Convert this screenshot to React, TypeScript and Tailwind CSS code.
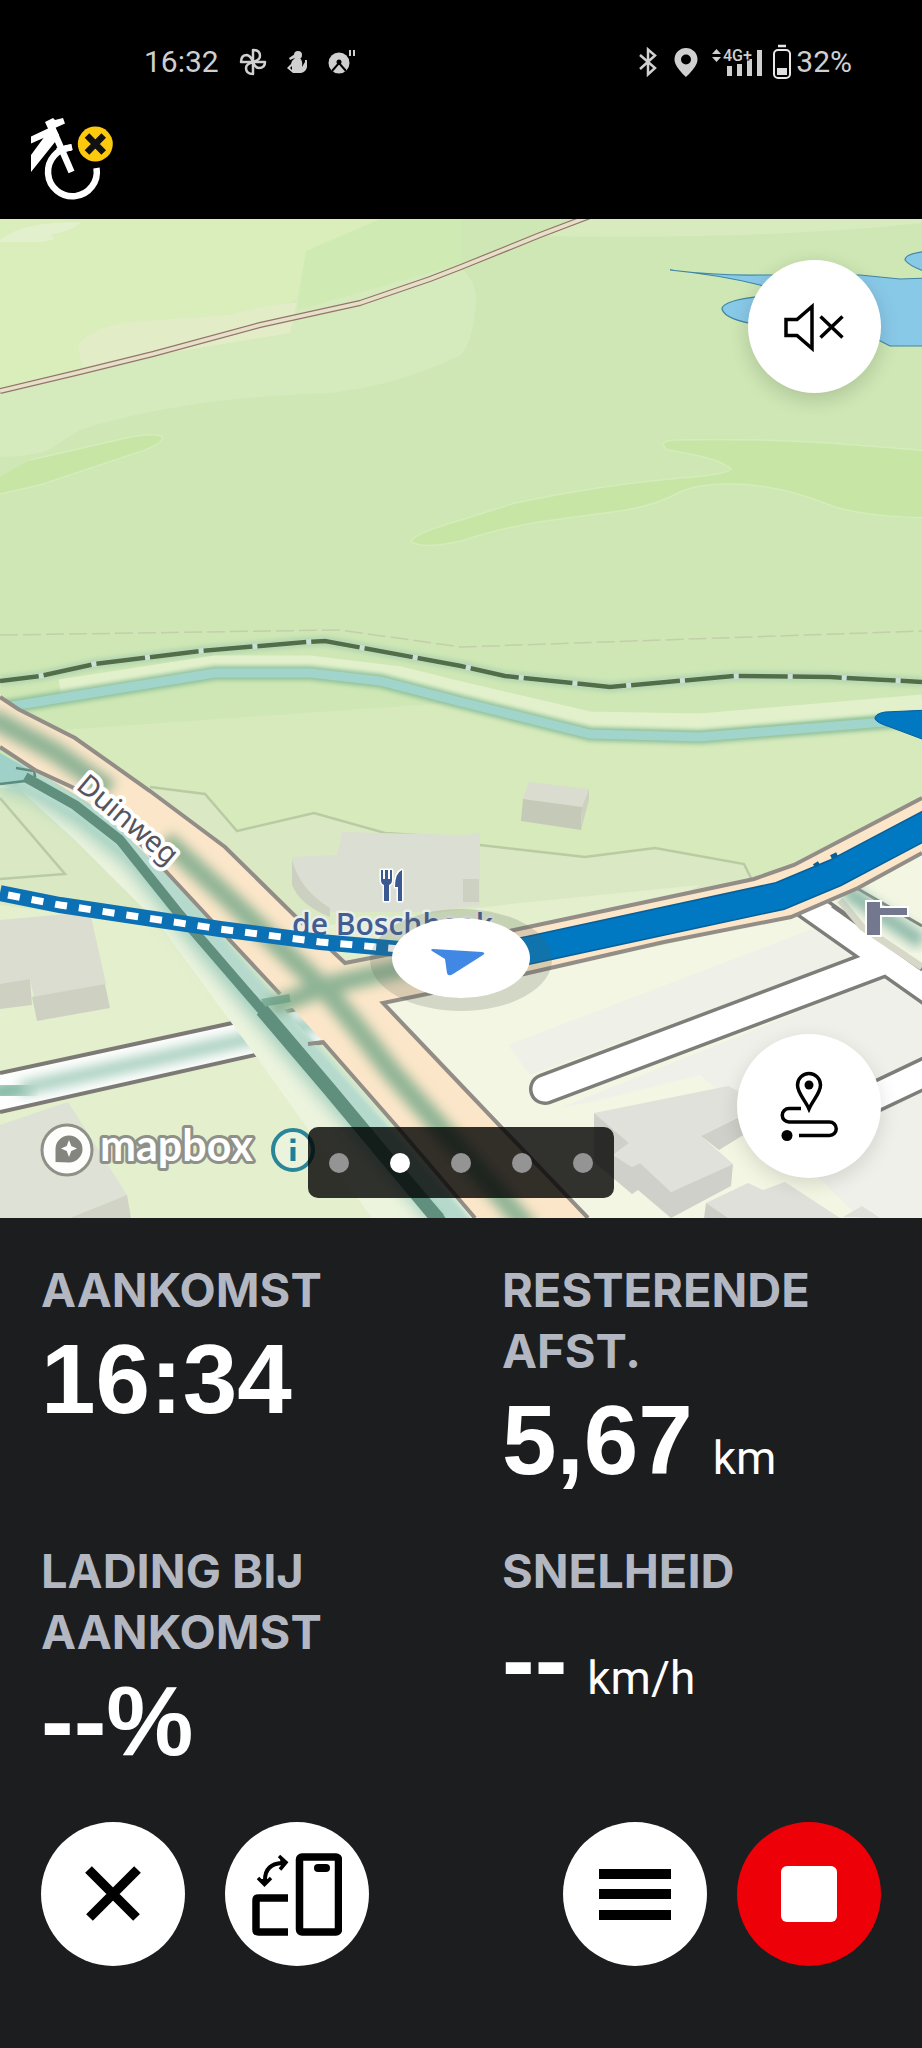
import React from 'react';

const metrics = [
  { label: 'AANKOMST', value: '16:34', unit: '' },
  { label: 'RESTERENDE AFST.', value: '5,67', unit: 'km' },
  { label: 'LADING BIJ AANKOMST', value: '--%', unit: '' },
  { label: 'SNELHEID', value: '--', unit: 'km/h' },
];

function StatusBar() {
  return (
    <div className="flex h-8 items-center justify-between pr-[70px] pl-[144px] font-['Roboto',sans-serif] text-[30px] leading-8 text-[#cfcfcf]">
      <div className="flex items-center gap-5">
        <time>16:32</time>
        <svg className="h-7 w-7" viewBox="0 0 28 28" fill="none" stroke="#d0d0d0" strokeWidth="2.5" strokeLinejoin="round" aria-hidden="true">
          <path d="M14 14V2Q21 2 21 8Q21 12 14 14Z" />
          <path d="M14 14H26Q26 20 20 20Q16 20 14 14Z" />
          <path d="M14 14V26Q7 26 7 20Q7 16 14 14Z" />
          <path d="M14 14H2Q2 7 8 7Q12 8 14 14Z" />
        </svg>
        <svg className="h-6 w-5" viewBox="0 0 20 24" fill="#d0d0d0" aria-hidden="true">
          <circle cx="11" cy="5" r="4" />
          <path fillRule="evenodd" d="M2 8L8 4L10 7L3 10ZM8 8H13Q16 11 15 17L18 12V10H20V17Q19 22 14 23H6L0 18L4 14Q5 10 8 8ZM5 16L3 18L5 20Z" />
        </svg>
        <svg className="h-7 w-7" viewBox="0 0 28 28" aria-hidden="true">
          <circle cx="12" cy="15" r="10.5" fill="#d0d0d0" />
          <path d="M5 23L12 15L19 23" fill="none" stroke="#000" strokeWidth="2" />
          <circle cx="12" cy="14" r="2.500" fill="#000" />
          <path d="M23 2V8M27 2V8" stroke="#d0d0d0" strokeWidth="2" />
        </svg>
      </div>
      <div className="flex items-center">
        <svg className="mr-4 h-8 w-[20px]" viewBox="0 0 20 32" fill="none" stroke="#d0d0d0" strokeWidth="2.500" aria-hidden="true">
          <path d="M2 9L17 22L10 28.500V3.500L17 9.500L2 23" />
        </svg>
        <svg className="mr-3 h-8 w-6" viewBox="0 0 24 32" fill="#d0d0d0" aria-hidden="true">
          <path fillRule="evenodd" d="M12 2A11.500 11.500 0 0 0 .5 13.500C.5 21 12 31 12 31S23.500 21 23.500 13.500A11.500 11.500 0 0 0 12 2ZM12 8.500A5 5 0 1 1 12 18.500A5 5 0 0 1 12 8.500Z" />
        </svg>
        <svg className="mr-2 h-9 w-[54px]" viewBox="0 0 54 36" fill="#d0d0d0" aria-hidden="true">
          <path d="M2 10L6.500 5L11 10ZM2 13H11L6.500 18Z" />
          <path d="M17 22H22V32H17ZM27 20H32V32H27ZM37 15H42V32H37ZM47 6H52V32H47Z" />
          <text x="13" y="17" fontFamily="Roboto" fontWeight="500" fontSize="16" stroke="#000" strokeWidth="2" paintOrder="stroke">4G+</text>
        </svg>
        <svg className="mr-1 h-9 w-5" viewBox="0 0 20 36" aria-hidden="true">
          <path d="M6 2H14" stroke="#e8e8e8" strokeWidth="2.500" />
          <rect x="2" y="6" width="16" height="28" rx="4" fill="none" stroke="#e8e8e8" strokeWidth="2" />
          <rect x="5" y="24" width="10" height="7" fill="#e0e0e0" />
        </svg>
        <span>32%</span>
      </div>
    </div>
  );
}

function BikeDisconnected() {
  return (
    <svg className="mt-[39px] ml-[30px] h-[84px] w-[84px]" viewBox="30 117 84 84" role="img" aria-label="Fiets niet verbonden">
      <path d="M96.500 168A24.400 24.400 0 1 1 71.500 147.500" fill="none" stroke="#fff" strokeWidth="6.500" />
      <path d="M57 151L72 147" stroke="#fff" strokeWidth="6" />
      <path d="M51 125L71.500 172" stroke="#fff" strokeWidth="6.500" />
      <path d="M45 122L53 118L55 120L63 118L65 123.500L55 128L59 135L55 142L31 172V155L43.500 138L31 143.500V136.500L48 128.500Z" fill="#fff" />
      <circle cx="95.300" cy="144" r="17.500" fill="#fdc90f" />
      <path d="M87 135.500L103.700 152.500M103.700 135.500L87 152.500" stroke="#111" strokeWidth="6.500" />
    </svg>
  );
}

function MapCanvas() {
  return (
    <svg className="block h-auto w-full" viewBox="0 219 922 999" role="img" aria-label="Navigatiekaart">
      <defs>
        <filter id="soft" x="-20%" y="-20%" width="140%" height="140%">
          <feGaussianBlur stdDeviation="6" />
        </filter>
        <filter id="softer" x="-20%" y="-20%" width="140%" height="140%">
          <feGaussianBlur stdDeviation="9" />
        </filter>
        <filter id="edge" x="-5%" y="-20%" width="110%" height="140%">
          <feGaussianBlur stdDeviation="2" />
        </filter>
      </defs>

      {/* land cover */}
      <rect y="219" width="922" height="999" fill="#cee7b4" />
      <path d="M0 219H461V355Q400 385 330 393Q180 398 80 430L45 452Q20 457 0 457Z" fill="#d5eabd" />
      <path d="M0 219H440L360 231L306 251L297 300L230 318L78 345L82 370L0 391Z" fill="#d9eebb" />
      <path d="M461 219H380L306 251L297 310L461 264Z" fill="#d0eab4" />
      <path d="M461 268V355Q474 340 476 300Q476 280 461 268Z" fill="#d5eabd" />
      <path d="M540 236Q760 240 922 223V219H590Z" fill="#d8ebbf" />
      <path d="M78 345Q90 328 130 322L230 315Q270 303 297 303L290 333L82 367Z" fill="#e2edc8" />
      <path d="M0 240Q20 222 80 222Q75 230 50 235Q62 240 40 242H0Z" fill="#e2f0cd" />
      <path d="M0 477L30 460L130 437Q160 432 163 438Q160 446 130 455L40 485L0 494Z" fill="#c7e6a5" />
      <path d="M30 460L130 437Q160 432 163 438Q160 446 130 455L40 485L0 494" fill="none" stroke="#d5ecbb" strokeWidth="1.500" />
      <path
        d="M411 541Q415 533 461 520L515 503Q600 485 680 478Q725 475 731 469Q720 458 667 450Q658 442 672 440Q750 438 830 443L930 451V518Q870 517 835 507Q780 485 735 484Q700 483 680 492Q655 506 620 511L560 519Q510 525 461 541Q420 550 411 541Z"
        fill="#c7e6a6" stroke="#d5ecbb" strokeWidth="1.500"
      />
      <path d="M0 391L80 372L153 354L260 325L360 303L430 279L461 267L540 235L590 216" fill="none" stroke="#94756a" strokeWidth="6" strokeLinejoin="round" />
      <path d="M0 391L80 372L153 354L260 325L360 303L430 279L461 267L540 235L590 216" fill="none" stroke="#e6e0c9" strokeWidth="3.600" strokeLinejoin="round" />
      <g fill="#89c9e8" stroke="#3f86a3" strokeWidth="1.200">
        <path d="M670 270Q720 276 760 275H860L900 279L930 278V346H890L800 300L760 285Q720 275 670 270Z" />
        <path d="M765 296Q722 300 722 309Q725 320 760 325L800 320Z" />
        <path d="M930 251Q905 253 905 260Q910 267 930 273Z" />
      </g>

      {/* fields south of the river */}
      <path d="M60 730L461 702L600 740L700 742L922 728V1218H0V760Z" fill="#d6eabb" />
      <path d="M0 760L150 787L205 794L237 831L314 813L385 833L585 857L655 848L744 864L754 880L520 940L300 960L0 1000Z" fill="#dae9c3" />
      <path d="M0 905L240 935L520 903L700 885L560 960L420 1218H0Z" fill="#e3efcd" />
      <path d="M383 1003L524 975L791 917L922 850V1218H588Z" fill="#f3f6e3" />
      <path d="M508 1045L815 928L860 955L530 1075Z" fill="#eff0e8" />
      <path d="M560 1108L888 976L922 1000V1218H860L790 1150L700 1075L600 1100Z" fill="#eff0e9" />
      <path d="M150 787L205 794L237 831L314 813L385 833L461 838M480 845L585 857L655 848L744 864L751 878M0 798L65 874L0 879" fill="none" stroke="#b9cba3" strokeWidth="2.500" />

      {/* boundary, path and river */}
      <path d="M0 635L340 630L461 647L922 631" fill="none" stroke="#c3cfab" strokeWidth="1.500" strokeDasharray="18 5" />
      <path d="M0 681L40 676L95 664L200 651L307 642L325 641L461 666L505 676L610 687L735 676L830 677L922 682" fill="none" stroke="#b3d6b0" strokeWidth="10" filter="url(#edge)" />
      <path d="M0 681L40 676L95 664L200 651L307 642L325 641L461 666L505 676L610 687L735 676L830 677L922 682" fill="none" stroke="#cbdfd6" strokeWidth="5" />
      <path d="M0 681L40 676L95 664L200 651L307 642L325 641L461 666L505 676L610 687L735 676L830 677L922 682" fill="none" stroke="#526e47" strokeWidth="4.500" strokeDasharray="49 5" strokeDashoffset="10" />
      <path d="M60 688L215 664H310L400 675L461 690L590 720L700 722L922 703" fill="none" stroke="#e2f1cb" strokeWidth="17" />
      <path d="M0 708L80 695L215 673H310L380 681L461 702L590 734L700 737L922 719" fill="none" stroke="#8fc09c" strokeWidth="14" filter="url(#edge)" />
      <path d="M0 708L80 695L215 673H310L380 681L461 702L590 734L700 737L922 719" fill="none" stroke="#a1d5cb" strokeWidth="9" />

      {/* buildings */}
      <path d="M529 782L589 789L582 807L523 799Z" fill="#dadccf" />
      <path d="M523 799L582 807L581 830L521 821Z" fill="#c5c9b7" />
      <path d="M582 807L589 789V800L581 830Z" fill="#ced1c0" />
      <path d="M292 857L337 855L342 832L461 835L480 833V905L430 912H330Q295 890 292 857Z" fill="#dbded2" />
      <path d="M292 860V885Q300 905 330 917V908Q300 890 292 860Z" fill="#cbd0c0" />
      <path d="M463 879H479V902H463Z" fill="#cdd1c1" />
      <path d="M0 920L90 912L106 984L34 997L30 979L0 985Z" fill="#dbddd0" />
      <path d="M0 984L30 979L32 1005L0 1009ZM32 997L105 984L110 1008L37 1021Z" fill="#ced1c2" />
      <path d="M0 1125L68 1102L127 1195L70 1218H0Z" fill="#dee1d5" />
      <path d="M127 1195L131 1218H70Z" fill="#d0d3c5" />
      <path d="M594 1113L728 1086L755 1100L740 1116L701 1136L733 1164L671 1192L640 1163L632 1167L613 1155L629 1143Z" fill="#e0e1da" />
      <path d="M594 1113L629 1143L613 1155L632 1167L640 1163L671 1192L733 1164L731 1186L671 1218L638 1190L632 1194L594 1162ZM701 1136L745 1114V1134L719 1150Z" fill="#cfd0c9" />
      <path d="M706 1203L748 1183L763 1190L785 1182L840 1218H706ZM843 1217L862 1206L880 1218Z" fill="#dfe0d9" />
      <path d="M706 1203L728 1218H704Z" fill="#cdcfc7" />

      {/* side streets */}
      <path d="M0 1073L250 1018L300 1008L325 1040L275 1050L0 1112Z" fill="#fdfefd" />
      <path d="M-10 1094L30 1087" stroke="#84b9a5" strokeWidth="20" filter="url(#soft)" />
      <path d="M20 1089L270 1034L330 1020" stroke="#a9cfc0" strokeWidth="14" fill="none" filter="url(#soft)" />
      <path d="M0 1073L297 1009M0 1112L277 1050L325 1042" fill="none" stroke="#7d7a75" strokeWidth="4" />
      <path d="M807 904L940 998M545 1089L880 963M860 1104L940 1066" fill="none" stroke="#7d7d7a" strokeWidth="32" strokeLinecap="round" />
      <path d="M807 904L940 998M545 1089L880 963M860 1104L940 1066" fill="none" stroke="#fff" strokeWidth="25" strokeLinecap="round" />
      <path d="M832 906L922 970M858 889L922 926" stroke="#7d7d7a" strokeWidth="3" />
      <path d="M840 900L862 927L922 967" fill="none" stroke="#d8d8c8" strokeWidth="7" />
      <path d="M845 890L922 942" stroke="#8bb8a9" strokeWidth="15" filter="url(#soft)" />

      {/* canal along the Duinweg */}
      <path d="M0 760L30 767L80 800L125 830L275 1000L475 1218H372L255 1055L160 925L75 840L20 790L0 788Z" fill="#edf4de" />
      <path d="M0 775L35 785L85 815L135 855L200 935L285 1035L450 1225" fill="none" stroke="#9acbbb" strokeWidth="26" filter="url(#softer)" />
      <path d="M20 778L85 812L147 862L222 950L300 1040L470 1230" fill="none" stroke="#b5dacd" strokeWidth="16" filter="url(#edge)" />
      <path d="M0 753L30 770L34 775L25 781L0 784Z" fill="#a0d1c8" />
      <path d="M16 768L34 771L35 776L25 781L0 784" fill="none" stroke="#5b8c7e" strokeWidth="2.500" />

      {/* Duinweg and the crossing road */}
      <path d="M0 694L18 709L75 738L150 791L225 847L295 916L345 963L514 930L754 879L794 865L922 798V853L858 888L791 917L664 942L524 974L383 1003L461 1085L588 1218H475L400 1130L323 1042L280 994L225 935L160 868L100 810L35 770L0 747Z" fill="#fbe6c9" />
      <g fill="none" stroke="#928d87" strokeWidth="4">
        <path d="M0 697L18 709L75 738L150 791L225 847L295 916L345 963L514 930L754 879L794 865L922 798" />
        <path d="M922 853L858 888L791 917L664 942L524 974L383 1003L461 1085L588 1218" />
        <path d="M475 1218L400 1130L323 1042L308 1044M280 994L225 935L160 865L100 800L35 770L0 747" />
      </g>
      <g fill="none" stroke="#8fb495" filter="url(#soft)">
        <path d="M-10 717L55 752L110 790M165 840L225 895L330 995L355 1025L390 1070L530 1230" strokeWidth="20" />
        <path d="M270 1008L330 985L450 957" strokeWidth="19" />
      </g>
      <path d="M25 777L75 805L120 840L180 915L262 1010L330 1090L440 1218" fill="none" stroke="#618f7d" strokeWidth="10" strokeLinejoin="round" />
      <path d="M262 1010L330 1090L440 1222" fill="none" stroke="#618f7d" strokeWidth="14" />
      <path d="M262 1003L290 998" stroke="#5d967d" strokeWidth="8" opacity=".6" />

      {/* labels */}
      <text
        transform="translate(75 788) rotate(40)" fontFamily="'Noto Sans', sans-serif" fontSize="29"
        fill="#55545e" stroke="#fff" strokeWidth="8" strokeLinejoin="round" paintOrder="stroke"
      >Duinweg</text>
      <text
        x="292" y="935" fontFamily="'Open Sans', sans-serif" fontWeight="600" fontSize="30"
        fill="#435d92" stroke="#e9eee8" strokeWidth="5" strokeLinejoin="round" paintOrder="stroke"
      >de Boschbeek</text>
      <g fill="#3c5a92" stroke="#fff" strokeWidth="3" paintOrder="stroke" strokeLinejoin="round">
        <path d="M381 870V880Q381 884 384 885V901H389V885Q392 884 392 880V870H390V879H388V870H385V879H383V870Z" />
        <path d="M402 870Q395 873 395 887H398V901H402Z" />
      </g>

      {/* travelled and upcoming route */}
      <path d="M0 893L60 905L220 929L320 942L400 949" fill="none" stroke="#0b70b4" strokeWidth="16" />
      <path d="M8 895L60 905L220 929L320 942L400 949" fill="none" stroke="#fff" strokeWidth="7" strokeDasharray="12 12" />
      <path d="M470 962L530 950L780 896L835 873L930 823" fill="none" stroke="#075f99" strokeWidth="29" />
      <path d="M470 962L530 950L780 896L835 873L930 823" fill="none" stroke="#0079c2" strokeWidth="26" />
      <path d="M814 866L819 863M831 857L837 854" fill="none" stroke="#075f99" strokeWidth="4" />
      <path d="M930 710L885 712Q874 714 875 719Q877 723 890 727L930 742Z" fill="#0079c2" stroke="#075f99" strokeWidth="1" />
      <path d="M867 902H880V908H907V915H880V935H867Z" fill="#73788f" stroke="#fff" strokeWidth="4" paintOrder="stroke" />

      {/* current position */}
      <ellipse cx="461" cy="960" rx="91" ry="51" fill="#55604f" opacity=".2" />
      <ellipse cx="461" cy="958" rx="69" ry="40" fill="#fff" />
      <path d="M433 949L482 952Q486 953 483 955L453 974Q448 977 447 973L445 959L432 951Q430 949 433 949Z" fill="#4187e4" />
    </svg>
  );
}

function Attribution() {
  return (
    <div className="absolute bottom-10 left-10 flex items-center gap-3">
      <a href="#mapbox" aria-label="mapbox">
        <svg className="block h-[56px] w-[218px]" viewBox="0 0 218 56" aria-hidden="true">
          <circle cx="27" cy="28" r="25" fill="#fdfefb" stroke="#8f9188" strokeWidth="3" />
          <path d="M15.500 40V27A13.500 13.500 0 1 1 29 40.500Z" fill="#84857f" />
          <path d="M29 18L31.300 24L37 26.500L31.300 29L29 35L26.700 29L21 26.500L26.700 24Z" fill="#fff" />
          <text
            x="60" y="39" fontFamily="Lato, sans-serif" fontWeight="700" fontSize="43"
            fill="#fff" stroke="#8f9188" strokeWidth="6" strokeLinejoin="round" paintOrder="stroke"
          >mapbox</text>
        </svg>
      </a>
      <button type="button" aria-label="Kaartinformatie">
        <svg className="block h-[46px] w-[46px]" viewBox="0 0 46 46" aria-hidden="true">
          <circle cx="23" cy="23" r="20" fill="#eef5e4" fillOpacity=".7" stroke="#2a8598" strokeWidth="4" />
          <path d="M20.500 11.500H25.500V16H20.500ZM20.500 20H25.500V34H20.500Z" fill="#1f7f96" />
        </svg>
      </button>
    </div>
  );
}

function RoundButton({ label, className, children }: { label: string; className: string; children: React.ReactNode }) {
  return (
    <button type="button" aria-label={label} className={`flex items-center justify-center rounded-full ${className}`}>
      {children}
    </button>
  );
}

export default function App() {
  return (
    <div className="flex min-h-screen flex-col bg-[#1c1d1f]">
      <header className="bg-black pt-[46px] pb-[18px]">
        <StatusBar />
        <BikeDisconnected />
      </header>

      <main className="flex flex-col">
        <section className="relative overflow-hidden">
          <MapCanvas />
          <Attribution />
          <RoundButton label="Geluid uit" className="absolute top-[41px] right-[41px] size-[133px] bg-white shadow-[0_6px_20px_rgba(0,0,0,0.16)]">
            <svg className="h-[54px] w-[62px]" viewBox="0 0 62 54" fill="none" stroke="#000" strokeWidth="3.500" aria-hidden="true">
              <path d="M2 19.500V35.500H13L28 48.500V6.500L13 19.500Z" />
              <path d="M36.500 16.500L58.500 37.500M58.500 16.500L36.500 37.500" />
            </svg>
          </RoundButton>
          <RoundButton label="Route-overzicht" className="absolute right-[41px] bottom-10 size-36 bg-white shadow-[0_6px_20px_rgba(0,0,0,0.12)]">
            <svg className="h-[70px] w-[60px]" viewBox="0 0 60 70" fill="none" stroke="#000" strokeWidth="3.500" aria-hidden="true">
              <path d="M30 38C26 29 18.500 22 18.500 14A11.500 11.500 0 0 1 41.500 14C41.500 22 34 29 30 38Z" />
              <circle cx="30" cy="14" r="4.500" fill="#000" stroke="none" />
              <path d="M22 37.500H10A6.750 6.750 0 0 0 10 51H50.500A6.750 6.750 0 0 1 50.500 64.500H20" />
              <circle cx="8" cy="64.500" r="5.500" fill="#000" stroke="none" />
            </svg>
          </RoundButton>
          <nav aria-label="Schermen" className="absolute bottom-5 left-1/2 flex h-[71px] -translate-x-1/2 items-center gap-[41px] rounded-[10px] bg-black/80 px-[21px]">
            {[1, 2, 3, 4, 5].map((page) => (
              <button
                key={page}
                type="button"
                aria-label={`Scherm ${page}`}
                className={page === 2 ? 'size-5 rounded-full bg-white' : 'size-5 rounded-full bg-[#949494]'}
              />
            ))}
          </nav>
        </section>

        <dl className="grid grid-cols-2 gap-y-10 pt-[41px]">
          {metrics.map((metric) => (
            <div key={metric.label} className="px-[41px]">
              <dt className="font-['Inter',sans-serif] text-[47px] leading-[61px] font-bold text-[#b2b7c1]">{metric.label}</dt>
              <dd className="font-['Liberation_Sans',sans-serif] text-[98px] leading-[119px] font-bold whitespace-nowrap text-white">
                {metric.value}
                {metric.unit && <span className="ml-5 font-['Roboto',sans-serif] text-[46px] leading-none font-normal">{metric.unit}</span>}
              </dd>
            </div>
          ))}
        </dl>
      </main>

      <footer className="flex justify-between px-[41px] pt-[41px] pb-20">
        <div className="flex gap-10">
          <RoundButton label="Sluiten" className="size-36 bg-white">
            <svg className="size-14" viewBox="0 0 56 56" stroke="#000" strokeWidth="9.500" aria-hidden="true">
              <path d="M3.500 3.500L51.500 51.500M52.500 3.500L4.500 51.500" />
            </svg>
          </RoundButton>
          <RoundButton label="Scherm draaien" className="size-36 bg-white">
            <svg className="h-[84px] w-[90px]" viewBox="0 0 90 84" fill="none" stroke="#000" aria-hidden="true">
              <rect x="47.500" y="5" width="39" height="75" rx="2.500" strokeWidth="7.500" />
              <path d="M66 16H74" strokeWidth="8" strokeLinecap="round" />
              <path d="M36 46H6.500Q4 46 4 48.500V77.500Q4 80 6.500 80H36" strokeWidth="7.500" />
              <path d="M13 28Q13 12 30 11" strokeWidth="4" />
              <path d="M27 4L34 10.500L28 17.500M6 26L12.500 32.500L19 26" strokeWidth="3.500" />
              <path d="M28 5L35 10.500L29 17ZM7 27H18L12.500 33Z" fill="#000" stroke="none" />
            </svg>
          </RoundButton>
        </div>
        <div className="flex gap-[30px]">
          <RoundButton label="Menu" className="size-36 bg-white">
            <svg className="h-[52px] w-[72px]" viewBox="0 0 72 52" aria-hidden="true">
              <path d="M0 1H72V11H0ZM0 21H72V31H0ZM0 42H72V52H0Z" />
            </svg>
          </RoundButton>
          <RoundButton label="Stoppen" className="size-36 bg-[#ed0007]">
            <svg className="size-14" viewBox="0 0 56 56" aria-hidden="true">
              <rect width="56" height="56" rx="6" fill="#fff" />
            </svg>
          </RoundButton>
        </div>
      </footer>
    </div>
  );
}
